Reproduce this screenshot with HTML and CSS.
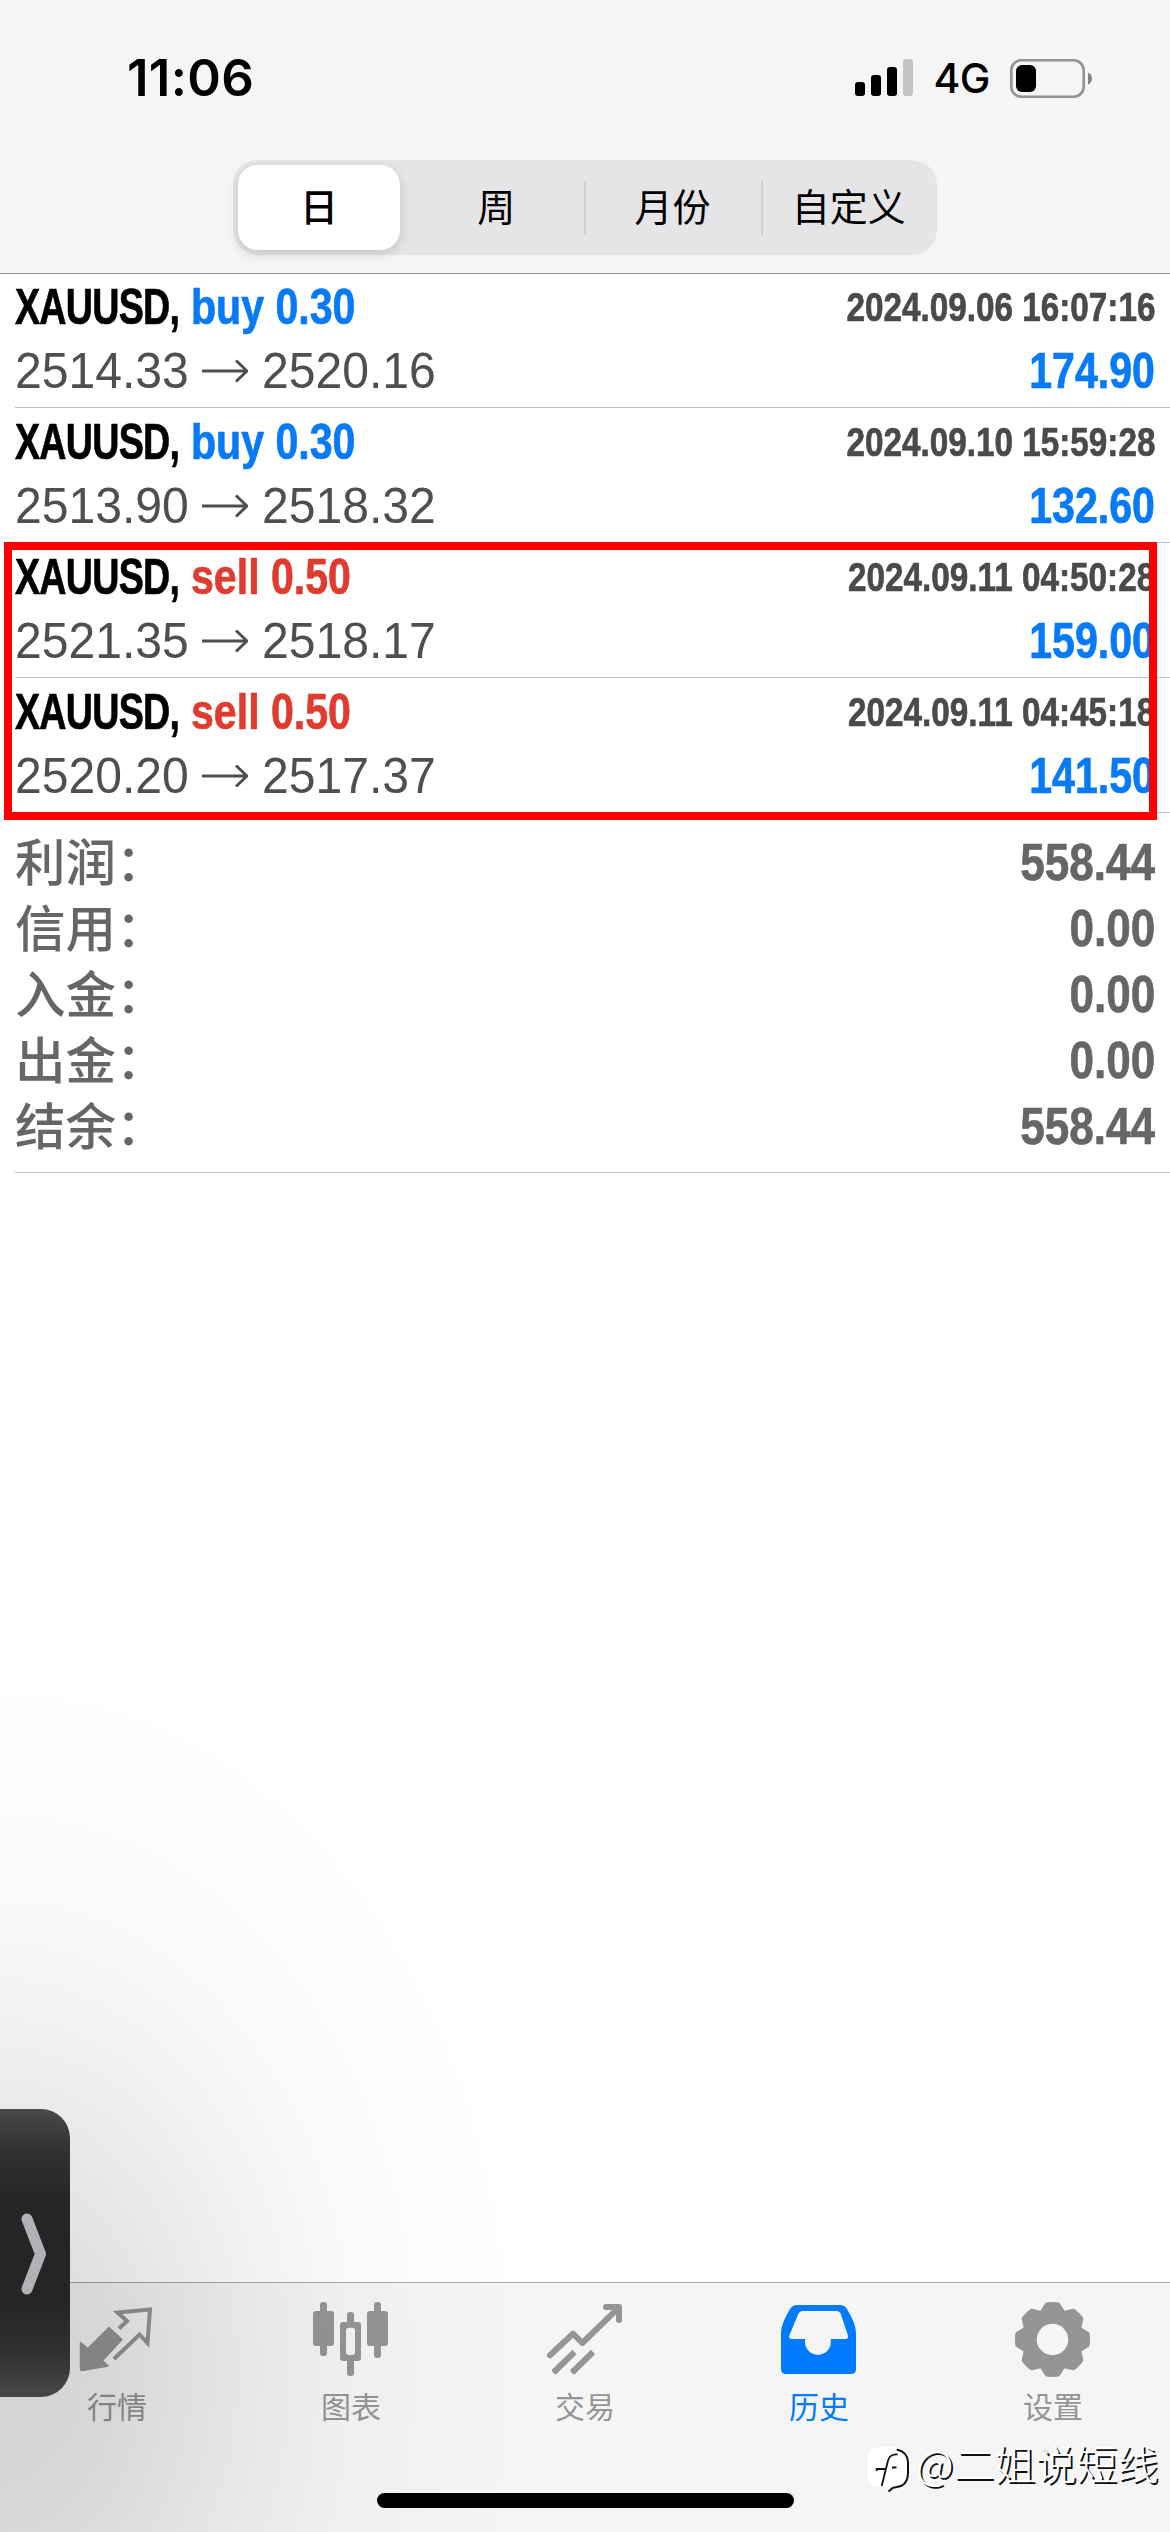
FILE: index.html
```html
<!DOCTYPE html>
<html lang="zh-CN">
<head>
<meta charset="utf-8">
<title>历史</title>
<link rel="stylesheet" href="styles.css">
</head>
<body>
<div class="screen">
  <header class="top">
    <div class="status">
      <span class="clock">11:06</span>
      <div class="status-right">
        <svg class="signal" viewBox="0 0 58 38"><rect x="0" y="23" width="10" height="14" rx="3"/><rect x="16" y="16" width="10" height="21" rx="3"/><rect x="32" y="8" width="10" height="29" rx="3"/><rect x="48" y="0" width="10" height="37" rx="3" fill="#c4c4c4"/></svg>
        <span class="network">4G</span>
        <svg class="battery" viewBox="0 0 82 39"><rect x="1.3" y="1.3" width="72.4" height="36.4" rx="10" fill="none" stroke="#939393" stroke-width="2.6"/><rect x="6" y="6" width="20" height="27" rx="6"/><path d="M78 13.5q4 2 4 6t-4 6z" fill="#848484"/></svg>
      </div>
    </div>
    <nav class="segments">
      <span class="segment selected">日</span>
      <span class="segment">周</span>
      <span class="segment divided">月份</span>
      <span class="segment divided">自定义</span>
    </nav>
  </header>

  <main class="history">
    <section class="deals">
      <article class="deal">
        <div class="line"><span class="symbol">XAUUSD,</span><span class="side buy">buy 0.30</span><time class="date">2024.09.06 16:07:16</time></div>
        <div class="line second"><span class="price">2514.33</span><svg class="arrow" viewBox="0 0 46 24"><path d="M0 12H45M34 1.500L45 12L34 22.500"/></svg><span class="price">2520.16</span><span class="profit">174.90</span></div>
      </article>
      <article class="deal">
        <div class="line"><span class="symbol">XAUUSD,</span><span class="side buy">buy 0.30</span><time class="date">2024.09.10 15:59:28</time></div>
        <div class="line second"><span class="price">2513.90</span><svg class="arrow" viewBox="0 0 46 24"><path d="M0 12H45M34 1.500L45 12L34 22.500"/></svg><span class="price">2518.32</span><span class="profit">132.60</span></div>
      </article>
      <article class="deal">
        <div class="line"><span class="symbol">XAUUSD,</span><span class="side sell">sell 0.50</span><time class="date">2024.09.11 04:50:28</time></div>
        <div class="line second"><span class="price">2521.35</span><svg class="arrow" viewBox="0 0 46 24"><path d="M0 12H45M34 1.500L45 12L34 22.500"/></svg><span class="price">2518.17</span><span class="profit">159.00</span></div>
      </article>
      <article class="deal">
        <div class="line"><span class="symbol">XAUUSD,</span><span class="side sell">sell 0.50</span><time class="date">2024.09.11 04:45:18</time></div>
        <div class="line second"><span class="price">2520.20</span><svg class="arrow" viewBox="0 0 46 24"><path d="M0 12H45M34 1.500L45 12L34 22.500"/></svg><span class="price">2517.37</span><span class="profit">141.50</span></div>
      </article>
      <div class="highlight"></div>
    </section>
    <section class="summary">
      <div class="total"><span class="label">利润：</span><span class="value">558.44</span></div>
      <div class="total"><span class="label">信用：</span><span class="value">0.00</span></div>
      <div class="total"><span class="label">入金：</span><span class="value">0.00</span></div>
      <div class="total"><span class="label">出金：</span><span class="value">0.00</span></div>
      <div class="total"><span class="label">结余：</span><span class="value">558.44</span></div>
    </section>
  </main>

  <footer class="bottom">
    <nav class="tabs">
      <div class="tab">
        <svg class="icon" viewBox="0 0 90 90"><path d="M8.500 47.500L16 53.500L37 32.500L50 44.500L30.500 65.500L36 71L10 75.500Q8.500 75.500 8.500 73Z" fill="currentColor" stroke="currentColor" stroke-width="1.500" stroke-linejoin="round"/><path d="M47 33.500L55 26L45.500 17.500L78 14.500L75.500 48L67.500 39.500L42 64" fill="none" stroke="currentColor" stroke-width="4"/></svg>
        <span>行情</span>
      </div>
      <div class="tab">
        <svg class="icon" viewBox="0 0 90 90" fill="currentColor"><rect x="14" y="7" width="7" height="54" rx="3"/><rect x="7" y="16" width="21" height="35" rx="3"/><rect x="68" y="7" width="7" height="56" rx="3"/><rect x="61" y="16" width="21" height="35" rx="3"/><rect x="41" y="17" width="7" height="15" rx="3"/><rect x="41" y="62" width="7" height="19" rx="3"/><path fill-rule="evenodd" d="M37 27h15q3 0 3 3v33q0 3-3 3H37q-3 0-3-3V30q0-3 3-3zM43 32.700q-3 0-3 3V57q0 3 3 3h3q3 0 3-3V35.700q0-3-3-3z"/></svg>
        <span>图表</span>
      </div>
      <div class="tab">
        <svg class="icon" viewBox="0 0 90 90" fill="none" stroke="currentColor" stroke-width="6"><path stroke-linecap="round" stroke-linejoin="round" d="M10 60.300L33 38.700L42.300 48L78 13.300M66 12H79V25"/><path d="M13.500 77.500L34.500 57M32 77.500L53 57"/><circle cx="15.500" cy="75.800" r="2.900" fill="currentColor" stroke="none"/><circle cx="33.800" cy="75.800" r="2.900" fill="currentColor" stroke="none"/></svg>
        <span>交易</span>
      </div>
      <div class="tab active">
        <svg class="icon" viewBox="0 0 90 90" fill="currentColor"><path fill-rule="evenodd" d="M23 10H66Q70.500 10 73 14Q82 29 82 38V74Q82 79 77 79H12Q7 79 7 74V38Q7 29 16 14Q18.500 10 23 10ZM29 16Q25.500 16 24 19.500L15.500 40Q14.300 44 18 44H31V47A12.900 12.900 0 0 0 56.800 47V44H71.500Q75 44 73.800 40L67 19.500Q66 16 62 16Z"/></svg>
        <span>历史</span>
      </div>
      <div class="tab">
        <svg class="icon" viewBox="0 0 90 90"><defs><mask id="hub"><rect width="90" height="90" fill="#fff"/><circle cx="44.500" cy="44.500" r="15.700" fill="#000"/></mask><path id="tooth" d="M-12 -26L-6 -35.500Q-5 -36 0 -36Q5 -36 6 -35.500L12 -26L12 26L6 35.500Q5 36 0 36Q-5 36 -6 35.500L-12 26Z" stroke="currentColor" stroke-width="3" stroke-linejoin="round"/></defs><g mask="url(#hub)" fill="currentColor"><circle cx="44.500" cy="44.500" r="29"/><g transform="translate(44.500 44.500)"><use href="#tooth"/><use href="#tooth" transform="rotate(45)"/><use href="#tooth" transform="rotate(90)"/><use href="#tooth" transform="rotate(135)"/></g></g></svg>
        <span>设置</span>
      </div>
    </nav>
    <div class="home-indicator"></div>
  </footer>

  <div class="shade"></div>
  <div class="drawer"><svg viewBox="0 0 30 90"><path d="M11 10L24.500 45L11 80"/></svg></div>
  <div class="watermark">
    <svg viewBox="0 0 50 50"><rect x="2" y="2" width="40" height="40" rx="11" fill="#fff"/><path d="M30.700 4.500Q41.500 7 42 17V28Q42 37 36 40.500Q31 42.500 27 42.700L22.500 46.500" fill="none" stroke="#111" stroke-width="2"/><path d="M31.500 9.500Q24 9 22 15.500L15.700 41M10.700 26V24H20.500M26 22.500H30.500" fill="none" stroke="#111" stroke-width="1.800"/></svg>
    <span>@二姐说短线</span>
  </div>
</div>
</body>
</html>
```
FILE: styles.css
```css
* { box-sizing: border-box; }
body { margin: 0; background: #fff; }
.screen {
  position: relative;
  display: flex;
  flex-direction: column;
  width: 1170px;
  height: 2532px;
  overflow: hidden;
  background: #fff;
  font-family: "Liberation Sans", "Noto Sans CJK SC", sans-serif;
}

/* status bar and period switch */
.top {
  flex: none;
  height: 273px;
  background: #f5f5f5;
  box-shadow: 0 1px 0 #8c8c8f;
}
.status {
  display: flex;
  justify-content: space-between;
  align-items: center;
  height: 160px;
  padding: 0 78px 4px 127px;
  font-family: Inter, sans-serif;
}
.clock { font-size: 51px; font-weight: 600; line-height: 60px; letter-spacing: .3px; }
.status-right { display: flex; align-items: center; }
.signal { width: 58px; height: 38px; }
.network { margin: 0 20px 0 20px; font-size: 41px; font-weight: 500; line-height: 50px; letter-spacing: -.5px; }
.battery { width: 82px; height: 39px; }
.segments {
  display: flex;
  width: 704px;
  height: 95px;
  margin: 0 auto;
  padding: 5px 0 5px 5px;
  border-radius: 25px;
  background: #e5e5e7;
}
.segment {
  position: relative;
  flex: 1;
  padding-bottom: 4px;
  font: 400 38px/80px "Noto Sans CJK SC", sans-serif;
  text-align: center;
}
.segment.selected {
  flex: 0 0 162px;
  margin-right: 8px;
  border-radius: 20px;
  background: #fff;
  box-shadow: 0 4px 12px rgba(0, 0, 0, .14);
  font-weight: 500;
}
.segment.divided::before {
  content: "";
  position: absolute;
  left: 0;
  top: 16px;
  width: 2px;
  height: 54px;
  background: #d0d0d3;
}

/* closed deals */
.history { flex: 1; }
.deals { position: relative; }
.deal {
  height: 135px;
  margin-left: 15px;
  padding: 1px 15px 0 0;
  border-bottom: 1px solid #c3c3c6;
}
.line { display: flex; line-height: 67px; }
.line.second { align-items: center; line-height: 60px; }
.symbol, .side, .date, .profit, .value {
  font-weight: 700;
  white-space: nowrap;
  -webkit-text-stroke: .7px currentColor;
}
.symbol {
  width: 176px;
  color: #000;
  font-size: 50px;
  letter-spacing: -1px;
  transform: scaleX(.753);
  transform-origin: left;
}
.side { font-size: 50px; transform: scaleX(.822); transform-origin: left; }
.buy { color: #067af7; }
.sell { color: #df3c2f; }
.date {
  margin-left: auto;
  color: #4a4a4d;
  font-size: 40px;
  transform: scaleX(.832);
  transform-origin: right;
}
.price {
  width: 174px;
  color: #4f4f52;
  font-size: 50px;
  white-space: nowrap;
  transform: scaleX(.962);
  transform-origin: left;
}
.arrow {
  width: 46px;
  height: 24px;
  margin: 0 14px 0 13px;
  fill: none;
  stroke: #4f4f52;
  stroke-width: 3;
}
.profit {
  margin-left: auto;
  color: #067af7;
  font-size: 50px;
  transform: scaleX(.822);
  transform-origin: right;
}
.highlight {
  position: absolute;
  left: 4px;
  top: 269px;
  width: 1153px;
  height: 278px;
  border: 8px solid #fd0000;
}

/* totals */
.summary {
  margin-left: 15px;
  padding: 16px 15px 13px 0;
  border-bottom: 1px solid #c3c3c6;
  color: #666;
}
.total { display: flex; justify-content: space-between; height: 66px; line-height: 66px; }
.label { font: 500 50.500px/60px "Noto Sans CJK SC", sans-serif; }
.value { font-size: 52px; transform: scaleX(.848); transform-origin: right; }

/* tab bar */
.bottom {
  flex: none;
  display: flex;
  flex-direction: column;
  align-items: center;
  height: 250px;
  padding-bottom: 24px;
  border-top: 1px solid #a9a9ab;
  background: #f5f5f5;
}
.tabs { display: flex; width: 100%; padding-top: 12px; }
.tab {
  flex: 1;
  display: flex;
  flex-direction: column;
  align-items: center;
  color: #959595;
  font: 400 30px/40px "Noto Sans CJK SC", sans-serif;
}
.tab.active { color: #007aff; }
.icon { width: 90px; height: 90px; }
.home-indicator { width: 417px; height: 15px; margin-top: auto; border-radius: 8px; background: #000; }

/* floating layers */
.shade {
  position: absolute;
  left: 0;
  bottom: 0;
  width: 600px;
  height: 1000px;
  background: radial-gradient(ellipse 540px 720px at 0 840px,
    rgba(0,0,0,.14), rgba(0,0,0,.12) 20%, rgba(0,0,0,.088) 35%, rgba(0,0,0,.052) 50%,
    rgba(0,0,0,.025) 65%, rgba(0,0,0,.01) 80%, transparent);
  pointer-events: none;
}
.drawer {
  position: absolute;
  left: 0;
  top: 2109px;
  display: flex;
  align-items: center;
  width: 70px;
  height: 288px;
  padding: 2px 0 0 16px;
  border-radius: 0 29px 29px 0;
  background: linear-gradient(#484848, #303030 16%, #252525 33%, #252525 67%, #303030 84%, #484848);
}
.drawer svg { width: 30px; height: 90px; fill: none; stroke: #b2b1b7; stroke-width: 11; stroke-linecap: round; stroke-linejoin: round; }
.watermark {
  position: absolute;
  left: 866px;
  top: 2445px;
  display: flex;
  color: #fff;
  font: 300 41px/34px "Noto Sans CJK SC", sans-serif;
  text-shadow: 2px 1.500px 0 #111;
}
.watermark svg { width: 50px; height: 50px; }
```
